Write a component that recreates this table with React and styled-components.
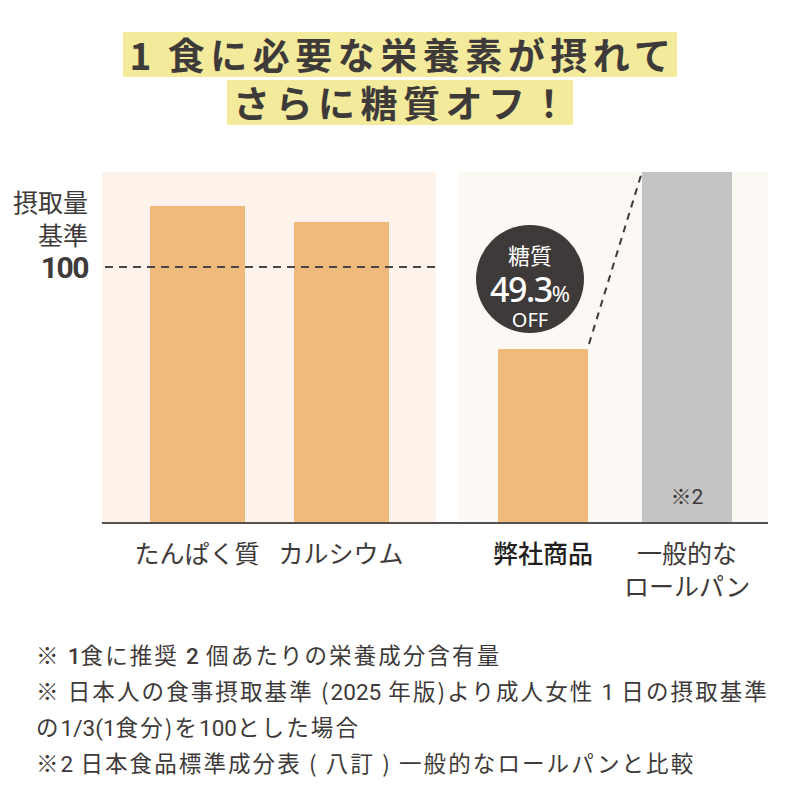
import React from 'react';
import styled, { createGlobalStyle } from 'styled-components';

const GlobalStyle = createGlobalStyle`
  html, body {
    margin: 0;
    padding: 0;
    background: #ffffff;
  }
  body {
    font-family: "Noto Sans CJK JP", "Noto Sans", sans-serif;
    color: #3e3a39;
  }
`;

const Page = styled.div`
  width: 800px;
  height: 800px;
  box-sizing: border-box;
  padding-top: 32px;
  overflow: hidden;
`;

const Title = styled.h1`
  margin: 0;
  display: flex;
  flex-direction: column;
  align-items: center;
  gap: 3px;
  font-size: 37px;
  font-weight: 700;
  line-height: 45px;
  letter-spacing: 5.5px;
`;

const Highlight = styled.span`
  display: block;
  background: #f3ea9c;
  padding: 0 0 0 6px;
`;

const TitleNum = styled.span`
  margin-right: 11px;
`;

const ChartRow = styled.div`
  display: flex;
  margin-top: 47px;
`;

const Axis = styled.div`
  width: 102px;
  box-sizing: border-box;
  padding: 13px 14px 0 0;
  text-align: right;
  font-size: 25px;
  line-height: 33px;
`;

const AxisValue = styled.div`
  font-family: Roboto, "Noto Sans", sans-serif;
  font-weight: 700;
  font-size: 30px;
  letter-spacing: -1.5px;
`;

const Plot = styled.div`
  display: flex;
  gap: 22px;
  width: 666px;
  border-bottom: 2px solid #555150;
`;

const Panel = styled.div`
  position: relative;
  width: ${p => p.$width}px;
  height: 350px;
  box-sizing: border-box;
  background: ${p => p.$bg};
  display: flex;
  align-items: flex-end;
  justify-content: ${p => (p.$center ? 'center' : 'flex-start')};
  padding-left: ${p => p.$padLeft || 0}px;
  gap: ${p => p.$gap}px;
`;

const Bar = styled.div`
  width: ${p => p.$width}px;
  height: ${p => p.$height}px;
  background: ${p => p.$color};
  display: flex;
  align-items: flex-end;
  justify-content: center;
`;

const BarNote = styled.span`
  font-family: Roboto, "Noto Sans CJK JP", sans-serif;
  font-size: 21px;
  line-height: 24px;
  color: #3e3a39;
  padding-bottom: 13px;
`;

const DashedRule = styled.div`
  position: absolute;
  left: 3px;
  right: 0;
  top: 94px;
  height: 2px;
  background: repeating-linear-gradient(
    to right,
    #4a4645 0 8px,
    transparent 8px 14px
  );
`;

const Connector = styled.svg`
  position: absolute;
  left: 0;
  top: 0;
  overflow: visible;
`;

const Badge = styled.div`
  position: absolute;
  left: 18px;
  top: 53px;
  width: 108px;
  height: 108px;
  border-radius: 50%;
  background: #3e3a39;
  color: #ffffff;
  display: flex;
  flex-direction: column;
  align-items: center;
  padding-top: 18px;
  box-sizing: border-box;
`;

const BadgeTitle = styled.span`
  font-size: 22px;
  line-height: 22px;
`;

const BadgeValue = styled.span`
  margin-top: 7px;
  font-family: "Noto Sans", sans-serif;
  font-size: 34px;
  line-height: 34px;
  font-weight: 500;
  letter-spacing: -1.5px;
`;

const BadgeUnit = styled.span`
  font-size: 22px;
  font-weight: 400;
  letter-spacing: 0;
`;

const BadgeOff = styled.span`
  font-family: "Noto Sans", sans-serif;
  font-size: 20px;
  line-height: 20px;
`;

const LabelRow = styled.div`
  display: flex;
  padding-left: 102px;
  gap: 22px;
  margin-top: 12px;
`;

const LabelGroup = styled.div`
  width: ${p => p.$width}px;
  box-sizing: border-box;
  display: flex;
  justify-content: ${p => (p.$center ? 'center' : 'flex-start')};
  padding-left: ${p => p.$padLeft || 0}px;
  gap: ${p => p.$gap}px;
`;

const Label = styled.div`
  width: ${p => p.$width}px;
  display: flex;
  flex-direction: column;
  align-items: center;
  white-space: nowrap;
  font-size: 25px;
  line-height: 33px;
  font-weight: ${p => (p.$strong ? 500 : 400)};
  color: ${p => (p.$strong ? '#231f1e' : '#3e3a39')};
`;

const Notes = styled.ul`
  list-style: none;
  margin: 35px 0 0;
  padding: 0 0 0 36px;
  font-size: 22.5px;
  line-height: 34px;
  letter-spacing: 2.1px;
  color: #3e3a39;
  white-space: nowrap;
`;

const Note = styled.li``;

const Num = styled.span`
  font-family: Roboto, "Noto Sans", sans-serif;
  letter-spacing: 0;
  font-weight: ${p => (p.$bold ? 500 : 400)};
`;

export default function App() {
  return (
    <Page>
      <GlobalStyle />
      <Title>
        <Highlight>
          <TitleNum>1</TitleNum>食に必要な栄養素が摂れて
        </Highlight>
        <Highlight>さらに糖質オフ！</Highlight>
      </Title>

      <ChartRow>
        <Axis>
          <div>摂取量</div>
          <div>基準</div>
          <AxisValue>100</AxisValue>
        </Axis>
        <Plot>
          <Panel $width={334} $bg="#fdf3ea" $center $gap={49}>
            <Bar $width={95} $height={316} $color="#f0ba7c" />
            <Bar $width={95} $height={300} $color="#f0ba7c" />
            <DashedRule />
          </Panel>
          <Panel $width={310} $bg="#fcf8f3" $padLeft={40} $gap={54}>
            <Bar $width={90} $height={173} $color="#f0ba7c" />
            <Bar $width={90} $height={350} $color="#c4c4c4">
              <BarNote>※2</BarNote>
            </Bar>
            <Connector width="310" height="350">
              <line
                x1="131"
                y1="172"
                x2="184"
                y2="0"
                stroke="#3e3a39"
                strokeWidth="2"
                strokeDasharray="7 6"
              />
            </Connector>
            <Badge>
              <BadgeTitle>糖質</BadgeTitle>
              <BadgeValue>
                49.3<BadgeUnit>%</BadgeUnit>
              </BadgeValue>
              <BadgeOff>OFF</BadgeOff>
            </Badge>
          </Panel>
        </Plot>
      </ChartRow>

      <LabelRow>
        <LabelGroup $width={334} $center $gap={49}>
          <Label $width={95}>たんぱく質</Label>
          <Label $width={95}>カルシウム</Label>
        </LabelGroup>
        <LabelGroup $width={310} $padLeft={40} $gap={54}>
          <Label $width={90} $strong>弊社商品</Label>
          <Label $width={90}>
            <span>一般的な</span>
            <span>ロールパン</span>
          </Label>
        </LabelGroup>
      </LabelRow>

      <Notes>
        <Note>
          ※ <Num $bold>1</Num>食に推奨 <Num $bold>2</Num> 個あたりの栄養成分含有量
        </Note>
        <Note>
          ※ 日本人の食事摂取基準 (<Num>2025</Num> 年版)より成人女性 <Num>1</Num> 日の摂取基準
        </Note>
        <Note>
          の<Num>1/3(1</Num>食分)を<Num>100</Num>とした場合
        </Note>
        <Note>
          ※<Num>2</Num> 日本食品標準成分表 ( 八訂 ) 一般的なロールパンと比較
        </Note>
      </Notes>
    </Page>
  );
}
